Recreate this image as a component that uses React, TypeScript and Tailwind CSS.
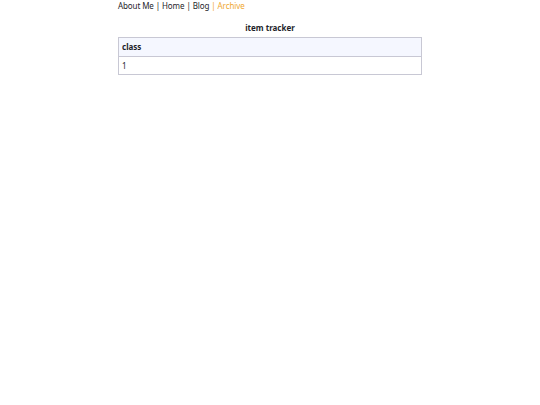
export default function App() {
  return (
    <div className="mx-auto w-[304px] font-['Noto_Sans',sans-serif] text-[8px] text-[#1e1e2a]">
      <nav className="leading-[12px] tracking-[-0.1px]">
        <span>About Me</span>
        <span> | </span>
        <span>Home</span>
        <span> | </span>
        <span>Blog</span>
        <span className="text-[#f0a830]"> | Archive</span>
      </nav>
      <h1 className="mt-[10px] text-center font-bold leading-[12px]">item tracker</h1>
      <table className="mt-[3px] w-full border-collapse border border-[#c8c8d4]">
        <thead>
          <tr className="bg-[#f5f7ff]">
            <th className="h-[19px] border border-[#c8c8d4] px-[3px] text-left font-bold">class</th>
          </tr>
        </thead>
        <tbody>
          <tr>
            <td className="h-[18px] border border-[#c8c8d4] px-[3px]">1</td>
          </tr>
        </tbody>
      </table>
    </div>
  );
}
